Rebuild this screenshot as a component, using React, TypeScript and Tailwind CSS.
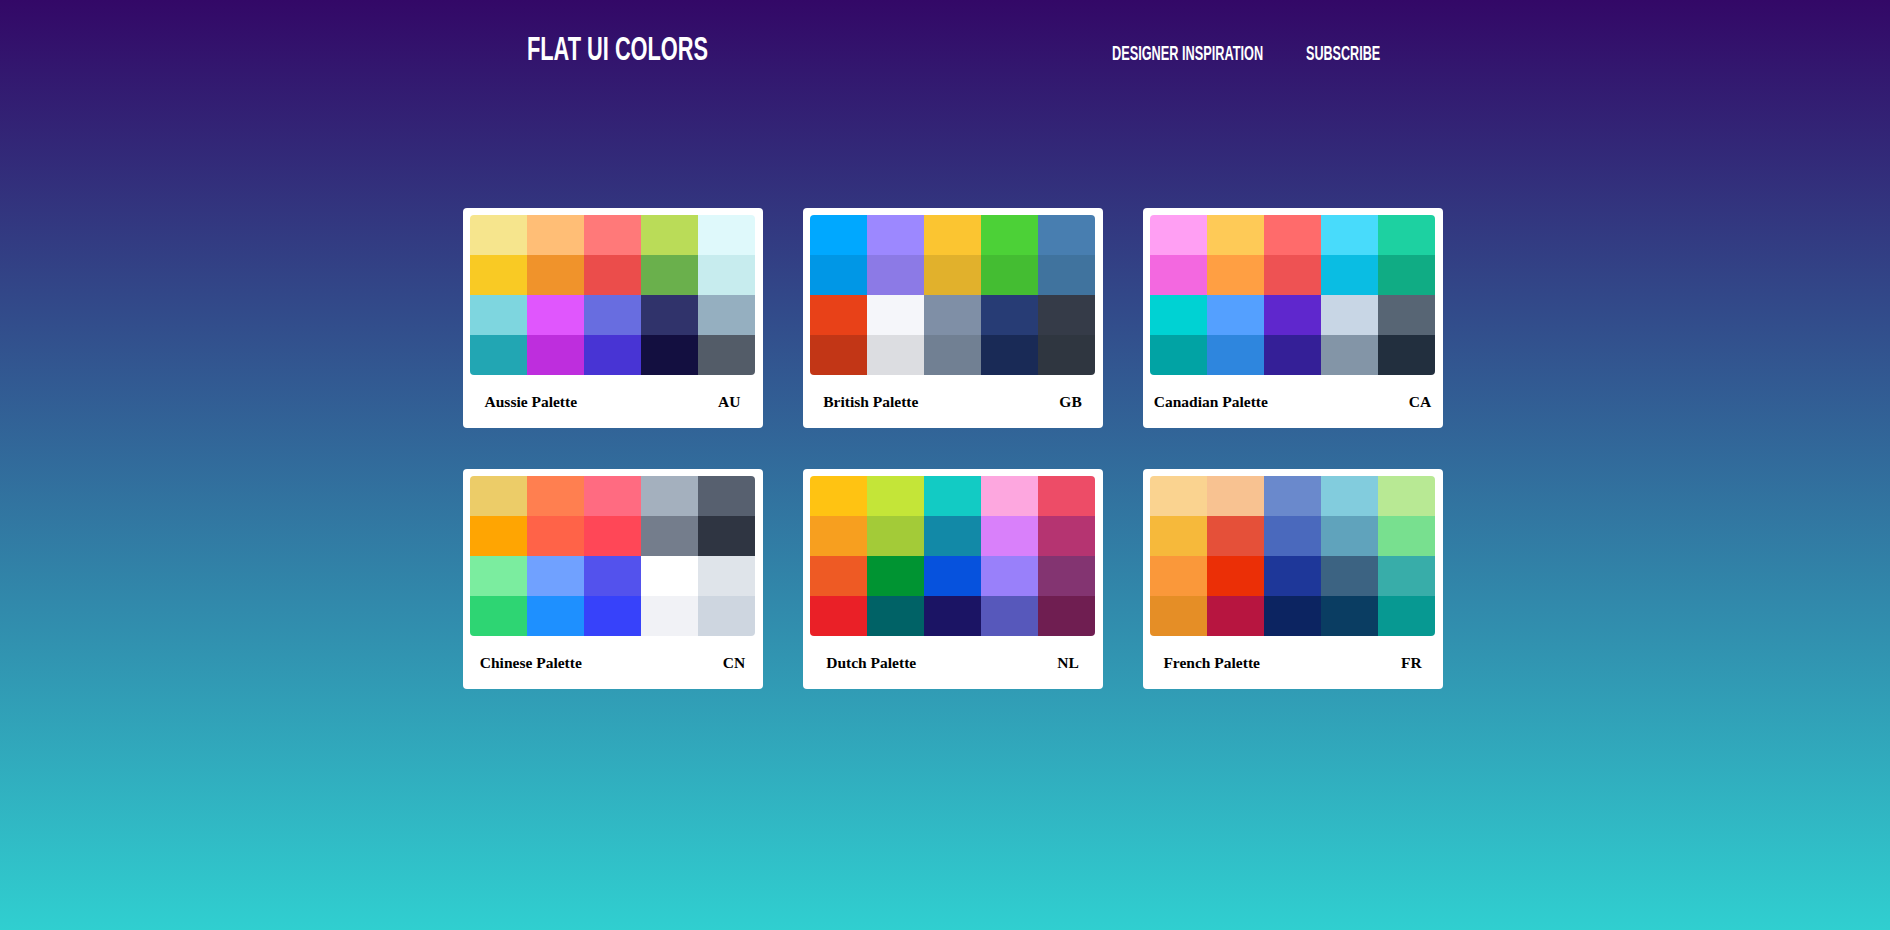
import React from 'react';

type Palette = {
  name: string;
  code: string;
  colors: string[];
};

const palettes: Palette[] = [
  {
    name: 'Aussie Palette',
    code: 'AU',
    colors: [
      '#f6e58d', '#ffbe76', '#ff7979', '#badc58', '#dff9fb',
      '#f9ca24', '#f0932b', '#eb4d4b', '#6ab04c', '#c7ecee',
      '#7ed6df', '#e056fd', '#686de0', '#30336b', '#95afc0',
      '#22a6b3', '#be2edd', '#4834d4', '#130f40', '#535c68',
    ],
  },
  {
    name: 'British Palette',
    code: 'GB',
    colors: [
      '#00a8ff', '#9c88ff', '#fbc531', '#4cd137', '#487eb0',
      '#0097e6', '#8c7ae6', '#e1b12c', '#44bd32', '#40739e',
      '#e84118', '#f5f6fa', '#7f8fa6', '#273c75', '#353b48',
      '#c23616', '#dcdde1', '#718093', '#192a56', '#2f3640',
    ],
  },
  {
    name: 'Canadian Palette',
    code: 'CA',
    colors: [
      '#ff9ff3', '#feca57', '#ff6b6b', '#48dbfb', '#1dd1a1',
      '#f368e0', '#ff9f43', '#ee5253', '#0abde3', '#10ac84',
      '#00d2d3', '#54a0ff', '#5f27cd', '#c8d6e5', '#576574',
      '#01a3a4', '#2e86de', '#341f97', '#8395a7', '#222f3e',
    ],
  },
  {
    name: 'Chinese Palette',
    code: 'CN',
    colors: [
      '#eccc68', '#ff7f50', '#ff6b81', '#a4b0be', '#57606f',
      '#ffa502', '#ff6348', '#ff4757', '#747d8c', '#2f3542',
      '#7bed9f', '#70a1ff', '#5352ed', '#ffffff', '#dfe4ea',
      '#2ed573', '#1e90ff', '#3742fa', '#f1f2f6', '#ced6e0',
    ],
  },
  {
    name: 'Dutch Palette',
    code: 'NL',
    colors: [
      '#ffc312', '#c4e538', '#12cbc4', '#fda7df', '#ed4c67',
      '#f79f1f', '#a3cb38', '#1289a7', '#d980fa', '#b53471',
      '#ee5a24', '#009432', '#0652dd', '#9980fa', '#833471',
      '#ea2027', '#006266', '#1b1464', '#5758bb', '#6f1e51',
    ],
  },
  {
    name: 'French Palette',
    code: 'FR',
    colors: [
      '#fad390', '#f8c291', '#6a89cc', '#82ccdd', '#b8e994',
      '#f6b93b', '#e55039', '#4a69bd', '#60a3bc', '#78e08f',
      '#fa983a', '#eb2f06', '#1e3799', '#3c6382', '#38ada9',
      '#e58e26', '#b71540', '#0c2461', '#0a3d62', '#079992',
    ],
  },
];

const PaletteCard: React.FC<{ palette: Palette }> = ({ palette }) => (
  <div className="w-[300px] h-[220px] bg-white rounded-[4px] px-[7px] pt-[7px]">
    <div className="grid grid-cols-5 grid-rows-4 w-[285px] h-[160px] rounded-[4px] overflow-hidden">
      {palette.colors.map((color, i) => (
        <div key={i} style={{ backgroundColor: color }} />
      ))}
    </div>
    {/* name is centred in its slot, the code trails it */}
    <div className="flex h-[53px] items-center font-['Liberation_Serif',serif] text-[15.5px] font-bold text-black">
      <div className="flex w-[123px] justify-center">
        <span className="whitespace-nowrap">{palette.name}</span>
        <span className="ml-[141px] -mr-[162px] whitespace-nowrap">{palette.code}</span>
      </div>
    </div>
  </div>
);

export default function App() {
  return (
    <div className="min-h-screen bg-linear-to-b/srgb from-[#330867] to-[#30cfd0] font-['Liberation_Sans',sans-serif]">
      <div className="w-[996px] mx-auto pl-4">
        {/* Header */}
        <header className="flex items-baseline justify-between px-16 pt-[32px] text-white font-bold">
          <a href="#" className="inline-block w-[183px] text-[33.5px] leading-[34px]">
            <span className="inline-block origin-left scale-x-[0.65] whitespace-nowrap">FLAT UI COLORS</span>
          </a>
          <nav className="flex items-baseline gap-[42px] text-[21px] leading-none">
            <a href="#" className="inline-block w-[152px]">
              <span className="inline-block origin-left scale-x-[0.606] whitespace-nowrap">DESIGNER INSPIRATION</span>
            </a>
            <a href="#" className="inline-block w-[73px]">
              <span className="inline-block origin-left scale-x-[0.6] whitespace-nowrap">SUBSCRIBE</span>
            </a>
          </nav>
        </header>

        {/* Palettes */}
        <main className="grid grid-cols-3 gap-x-10 gap-y-[41px] mt-[142px]">
          {palettes.map((p) => (
            <PaletteCard key={p.code} palette={p} />
          ))}
        </main>
      </div>
    </div>
  );
}
